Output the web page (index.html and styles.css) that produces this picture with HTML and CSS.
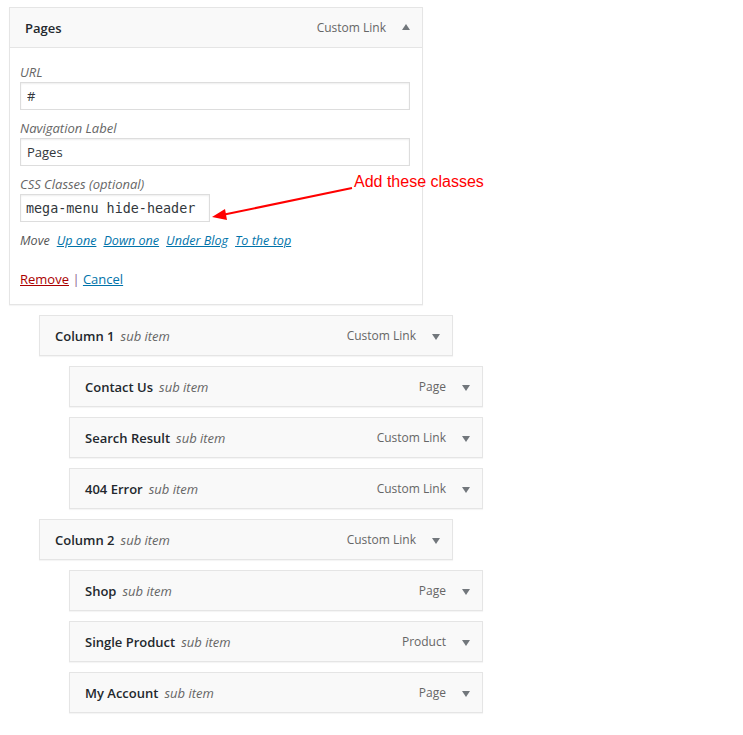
FILE: index.html
```html
<!DOCTYPE html>
<html lang="en">
<head>
  <meta charset="UTF-8">
  <title>Menu Structure</title>
  <link rel="stylesheet" href="styles.css">
</head>
<body>
  <ul class="menu">
    <li class="menu-item depth-0">
      <div class="item-panel">
        <div class="item-bar open">
          <span class="item-title">Pages</span>
          <span class="item-type">Custom Link</span>
          <span class="toggle up"></span>
        </div>
        <div class="item-settings">
          <label class="field">
            <span class="field-label">URL</span>
            <input type="text" value="#">
          </label>
          <label class="field">
            <span class="field-label">Navigation Label</span>
            <input type="text" value="Pages">
          </label>
          <label class="field">
            <span class="field-label">CSS Classes (optional)</span>
            <input type="text" class="classes" value="mega-menu hide-header">
          </label>
          <div class="move">
            <span>Move</span>
            <a href="#">Up one</a>
            <a href="#">Down one</a>
            <a href="#">Under Blog</a>
            <a href="#">To the top</a>
          </div>
          <div class="actions">
            <a href="#" class="remove">Remove</a> <span class="sep">|</span> <a href="#">Cancel</a>
          </div>
        </div>
      </div>
      <div class="note">
        <svg class="note-arrow" width="150" height="40" viewBox="0 0 150 40">
          <line x1="142" y1="2" x2="12" y2="29" stroke="#f00" stroke-width="2"/>
          <polygon points="2,31 15,23 17,34" fill="#f00"/>
        </svg>
        <span class="note-text">Add these classes</span>
      </div>
    </li>

    <li class="menu-item depth-1"><div class="item-bar"><span class="item-title">Column 1</span><em class="sub">sub item</em><span class="item-type">Custom Link</span><span class="toggle"></span></div></li>
    <li class="menu-item depth-2"><div class="item-bar"><span class="item-title">Contact Us</span><em class="sub">sub item</em><span class="item-type">Page</span><span class="toggle"></span></div></li>
    <li class="menu-item depth-2"><div class="item-bar"><span class="item-title">Search Result</span><em class="sub">sub item</em><span class="item-type">Custom Link</span><span class="toggle"></span></div></li>
    <li class="menu-item depth-2"><div class="item-bar"><span class="item-title">404 Error</span><em class="sub">sub item</em><span class="item-type">Custom Link</span><span class="toggle"></span></div></li>
    <li class="menu-item depth-1"><div class="item-bar"><span class="item-title">Column 2</span><em class="sub">sub item</em><span class="item-type">Custom Link</span><span class="toggle"></span></div></li>
    <li class="menu-item depth-2"><div class="item-bar"><span class="item-title">Shop</span><em class="sub">sub item</em><span class="item-type">Page</span><span class="toggle"></span></div></li>
    <li class="menu-item depth-2"><div class="item-bar"><span class="item-title">Single Product</span><em class="sub">sub item</em><span class="item-type">Product</span><span class="toggle"></span></div></li>
    <li class="menu-item depth-2"><div class="item-bar"><span class="item-title">My Account</span><em class="sub">sub item</em><span class="item-type">Page</span><span class="toggle"></span></div></li>
  </ul>
</body>
</html>
```

FILE: styles.css
```css
body {
  margin: 0;
  font-family: 'Open Sans', sans-serif;
  font-size: 13px;
  color: #23282d;
  background: #fff;
}

.menu {
  list-style: none;
  margin: 0;
  padding: 7px 0 0 9px;
}

.menu-item {
  width: 414px;
  margin-bottom: 10px;
}

.depth-0 {
  position: relative;
}

.depth-1 {
  margin-left: 30px;
}

.depth-2 {
  margin-left: 60px;
}

.item-panel {
  border: 1px solid #e5e5e5;
  box-shadow: 0 1px 1px rgba(0, 0, 0, 0.04);
}

.item-bar {
  display: flex;
  align-items: center;
  height: 39px;
  padding: 0 12px 0 15px;
  background: #f9f9f9;
  border: 1px solid #e5e5e5;
  box-shadow: 0 1px 1px rgba(0, 0, 0, 0.04);
}

.item-bar.open {
  border: none;
  border-bottom: 1px solid #e5e5e5;
  box-shadow: none;
}

.item-title {
  font-weight: 600;
  color: #23282d;
  margin-top: 1px;
}

.sub {
  margin-left: 6px;
  margin-top: 1px;
  color: #666;
}

.item-type {
  margin-left: auto;
  color: #666;
  font-size: 12px;
}

.toggle {
  width: 0;
  height: 0;
  margin-left: 16px;
  margin-top: 2px;
  border-left: 4px solid transparent;
  border-right: 4px solid transparent;
  border-top: 6px solid #72777c;
}

.toggle.up {
  border-top: none;
  border-bottom: 6px solid #72777c;
  margin-top: -2px;
}

.item-settings {
  padding: 14px 12px 16px 10px;
}

.field {
  display: block;
  margin-bottom: 8px;
}

.field-label {
  display: block;
  font-style: italic;
  color: #666;
  line-height: 20px;
}

.field input {
  display: block;
  box-sizing: border-box;
  width: 390px;
  height: 28px;
  margin: 0;
  padding: 2px 6px;
  font-family: 'Open Sans', sans-serif;
  font-size: 13px;
  color: #32373c;
  border: 1px solid #ddd;
  box-shadow: inset 0 1px 2px rgba(0, 0, 0, 0.07);
}

.field input.classes {
  width: 190px;
  padding-left: 5px;
  font-family: 'DejaVu Sans Mono', monospace;
  font-size: 13.4px;
}

.move {
  margin-top: 10px;
  display: flex;
  gap: 7px;
  font-style: italic;
  font-size: 12.6px;
  color: #555;
}

.move a {
  color: #0073aa;
}

.actions {
  margin-top: 21px;
}

.actions a {
  color: #0073aa;
}

.actions a.remove {
  color: #a00;
}

.sep {
  color: #8a5f8f;
}

/* red callout pointing at the classes field */
.note {
  position: absolute;
  left: 201px;
  top: 164px;
  display: flex;
  align-items: flex-start;
  white-space: nowrap;
}

.note-arrow {
  flex-shrink: 0;
  margin-top: 15px;
}

.note-text {
  margin-left: -6px;
  margin-top: 2px;
  font-family: 'Liberation Sans', Arial, sans-serif;
  font-size: 16px;
  color: #f00;
}
```
